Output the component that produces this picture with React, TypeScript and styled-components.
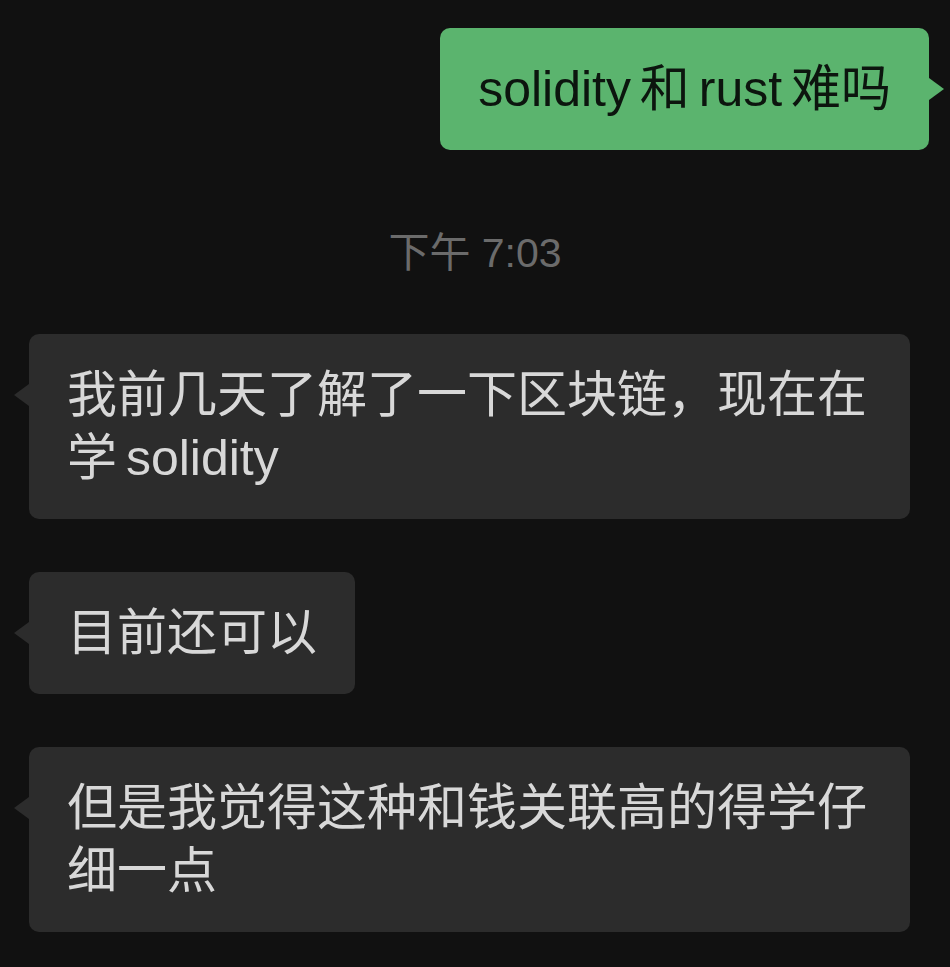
import React from "react";
import styled, { createGlobalStyle, css } from "styled-components";

const GlobalStyle = createGlobalStyle`
  html, body {
    margin: 0;
    padding: 0;
    background: #111111;
  }
  * {
    box-sizing: border-box;
  }
`;

const FONT = `"Liberation Sans", "Noto Sans CJK SC", sans-serif`;

const ChatWrapper = styled.div`
  min-height: 967px;
  background: #111111;
  padding: 28px 21px 0 29px;
  display: flex;
  flex-direction: column;
  font-family: ${FONT};
`;

const MessageRow = styled.div<{ mine?: boolean }>`
  display: flex;
  justify-content: ${(p) => (p.mine ? "flex-end" : "flex-start")};
  margin-bottom: ${(p) => (p.mine ? "0" : "53px")};
`;

const Bubble = styled.div<{ mine?: boolean }>`
  position: relative;
  max-width: 881px;
  padding: 30px 38px 29px 38px;
  border-radius: 10px;
  font-size: 50px;
  line-height: 63px;
  word-spacing: -5px;
  ${(p) =>
    p.mine
      ? css`
          background: #5bb46e;
          color: #0c150e;
        `
      : css`
          background: #2c2c2c;
          color: #d8d8d8;
        `}

  /* the little tail pointing at the speaker */
  &::before {
    content: "";
    position: absolute;
    top: 50px;
    width: 0;
    height: 0;
    border-top: 11px solid transparent;
    border-bottom: 11px solid transparent;
    ${(p) =>
      p.mine
        ? css`
            right: -15px;
            border-left: 15px solid #5bb46e;
          `
        : css`
            left: -15px;
            border-right: 15px solid #2c2c2c;
          `}
  }
`;

const TimeStamp = styled.div`
  text-align: center;
  color: #6b6b6b;
  font-size: 41px;
  line-height: 50px;
  margin: 78px 0 56px;
  padding-right: 8px;
`;

type Message = {
  text: string;
  mine?: boolean;
};

const messages: Message[] = [
  { text: "我前几天了解了一下区块链，现在在学 solidity" },
  { text: "目前还可以" },
  { text: "但是我觉得这种和钱关联高的得学仔细一点" },
];

export default function App() {
  return (
    <>
      <GlobalStyle />
      <ChatWrapper>
        <MessageRow mine>
          <Bubble mine>solidity 和 rust 难吗</Bubble>
        </MessageRow>

        <TimeStamp>下午 7:03</TimeStamp>

        {messages.map((msg, index) => (
          <MessageRow key={index}>
            <Bubble>{msg.text}</Bubble>
          </MessageRow>
        ))}
      </ChatWrapper>
    </>
  );
}
